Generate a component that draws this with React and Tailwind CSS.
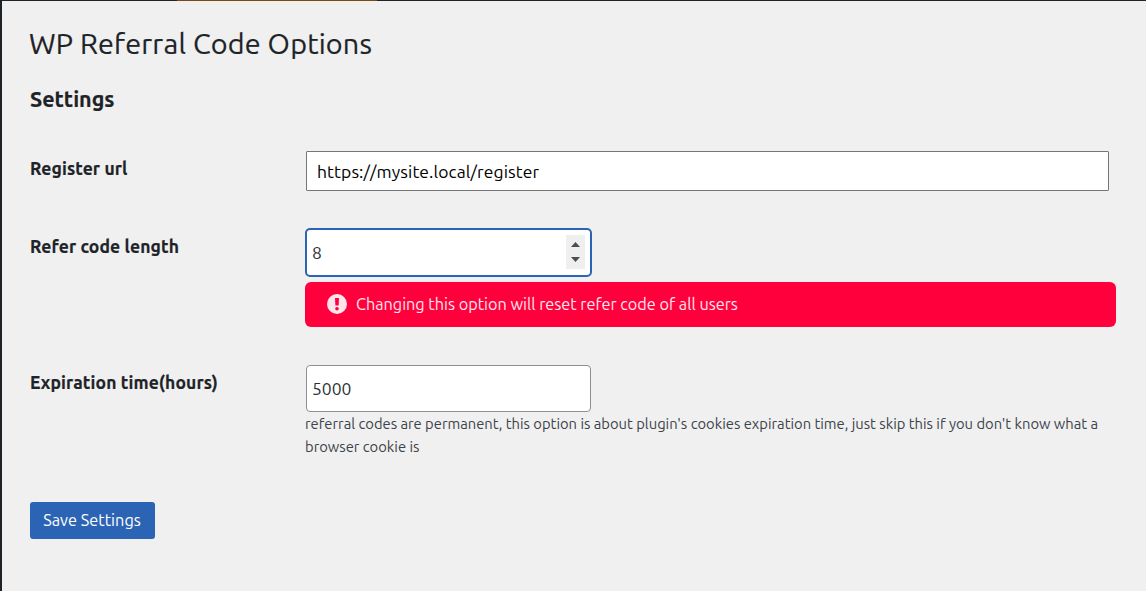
import { useState } from "react";

function Row({ label, className, labelClass = "pt-1.5", children }) {
  return (
    <div className={`grid grid-cols-[275px_811px] ${className}`}>
      <label className={`text-[17.5px] leading-6 font-bold tracking-[0.007em] text-[#1d2327] [-webkit-text-stroke:0.2px_#1d2327] ${labelClass}`}>{label}</label>
      <div>{children}</div>
    </div>
  );
}

function Spinner({ onStep }) {
  return (
    <div className="mr-[5px] mb-px flex h-[34px] w-[19px] flex-col bg-[#efefef]">
      <button type="button" aria-label="Increase" onClick={() => onStep(1)} className="flex flex-1 items-center justify-center pt-[2px]">
        <svg width="9" height="5" viewBox="0 0 9 5" fill="#4d4d4d"><path d="M0 5 4.5 0 9 5Z" /></svg>
      </button>
      <button type="button" aria-label="Decrease" onClick={() => onStep(-1)} className="flex flex-1 items-center justify-center pb-[2px]">
        <svg width="9" height="5" viewBox="0 0 9 5" fill="#4d4d4d"><path d="M0 0h9L4.5 5Z" /></svg>
      </button>
    </div>
  );
}

export default function App() {
  const [url, setUrl] = useState("https://mysite.local/register");
  const [length, setLength] = useState(8);
  const [hours, setHours] = useState("5000");

  return (
    <div className="flex h-[591px] w-[1146px] flex-col overflow-hidden border-l-2 border-[#1d2327] bg-[#f0f0f0] font-['Ubuntu','Noto_Sans',sans-serif]">
      <div className="flex h-px shrink-0 bg-[#1d2327]">
        <div className="ml-[175px] w-[200px] bg-[#7c4a10]" />
      </div>
      <main className="flex flex-col items-start pl-7">
        <h1 className="-ml-px mt-[24px] text-[28.75px] leading-9 tracking-[0.007em] whitespace-nowrap text-[#1d2327] [-webkit-text-stroke:0.2px_#1d2327]"><span>WP Referral Code Options</span></h1>
        <h2 className="mt-[24px] text-[21.5px] leading-7 font-bold text-[#1d2327] [-webkit-text-stroke:0.2px_#1d2327]"><span>Settings</span></h2>
        <Row label={<span>Register url</span>} className="mt-[38px] h-10">
          <input
            value={url}
            onChange={(e) => setUrl(e.target.value)}
            className="ml-px block h-10 w-[803px] rounded-[1px] border border-[#767676] bg-white px-[10px] text-[17.5px] tracking-[0.006em] text-black outline-none"
          />
        </Row>
        <Row label={<span>Refer code length</span>} labelClass="pt-[7px]" className="mt-[37px]">
          <div className="flex h-[49px] w-[287px] items-center rounded-[5px] border-2 border-[#2c64b5] bg-white">
            <input
              value={length}
              onChange={(e) => setLength(Number(e.target.value) || 0)}
              className="h-full min-w-0 flex-1 pb-px pl-[5px] text-[17.5px] text-[#2c3338] outline-none"
            />
            <Spinner onStep={(d) => setLength(length + d)} />
          </div>
          <div className="mt-[5px] flex h-[45px] items-center rounded-[6px] bg-[#ff003c] pb-px pl-[22px] text-[16.25px] text-[#ffe5eb]">
            <svg width="20" height="20" viewBox="0 0 20 20" className="mr-[9px] shrink-0">
              <circle cx="10" cy="10" r="10" fill="#ffe5eb" />
              <path d="M8 4h4l-.4 7.6h-3.2Z" fill="#ff003c" />
              <circle cx="10" cy="14.8" r="1.8" fill="#ff003c" />
            </svg>
            <span className="tracking-[-0.015px]">Changing this option will reset refer code of all users</span>
          </div>
        </Row>
        <Row label={<span>Expiration time(hours)</span>} className="mt-[38px]">
          <input
            value={hours}
            onChange={(e) => setHours(e.target.value)}
            className="ml-px block h-[47px] w-[285px] rounded-[4px] border border-[#8c8f94] bg-white px-[5px] pb-px text-[17.5px] text-[#2c3338] outline-none"
          />
          <p className="text-[14.75px] leading-[23px] whitespace-nowrap text-[#3c434a]">
            <span>referral codes are permanent, this option is about plugin's cookies expiration time, just skip this if you don't know what a</span>
            <br />
            <span>browser cookie is</span>
          </p>
        </Row>
        <button type="button" className="mt-[44px] h-[37px] w-[125px] rounded-[3px] bg-[#2c64b5] pr-px pb-px text-[16.25px] tracking-[0.03px] whitespace-nowrap text-white">
          <span>Save Settings</span>
        </button>
      </main>
    </div>
  );
}
